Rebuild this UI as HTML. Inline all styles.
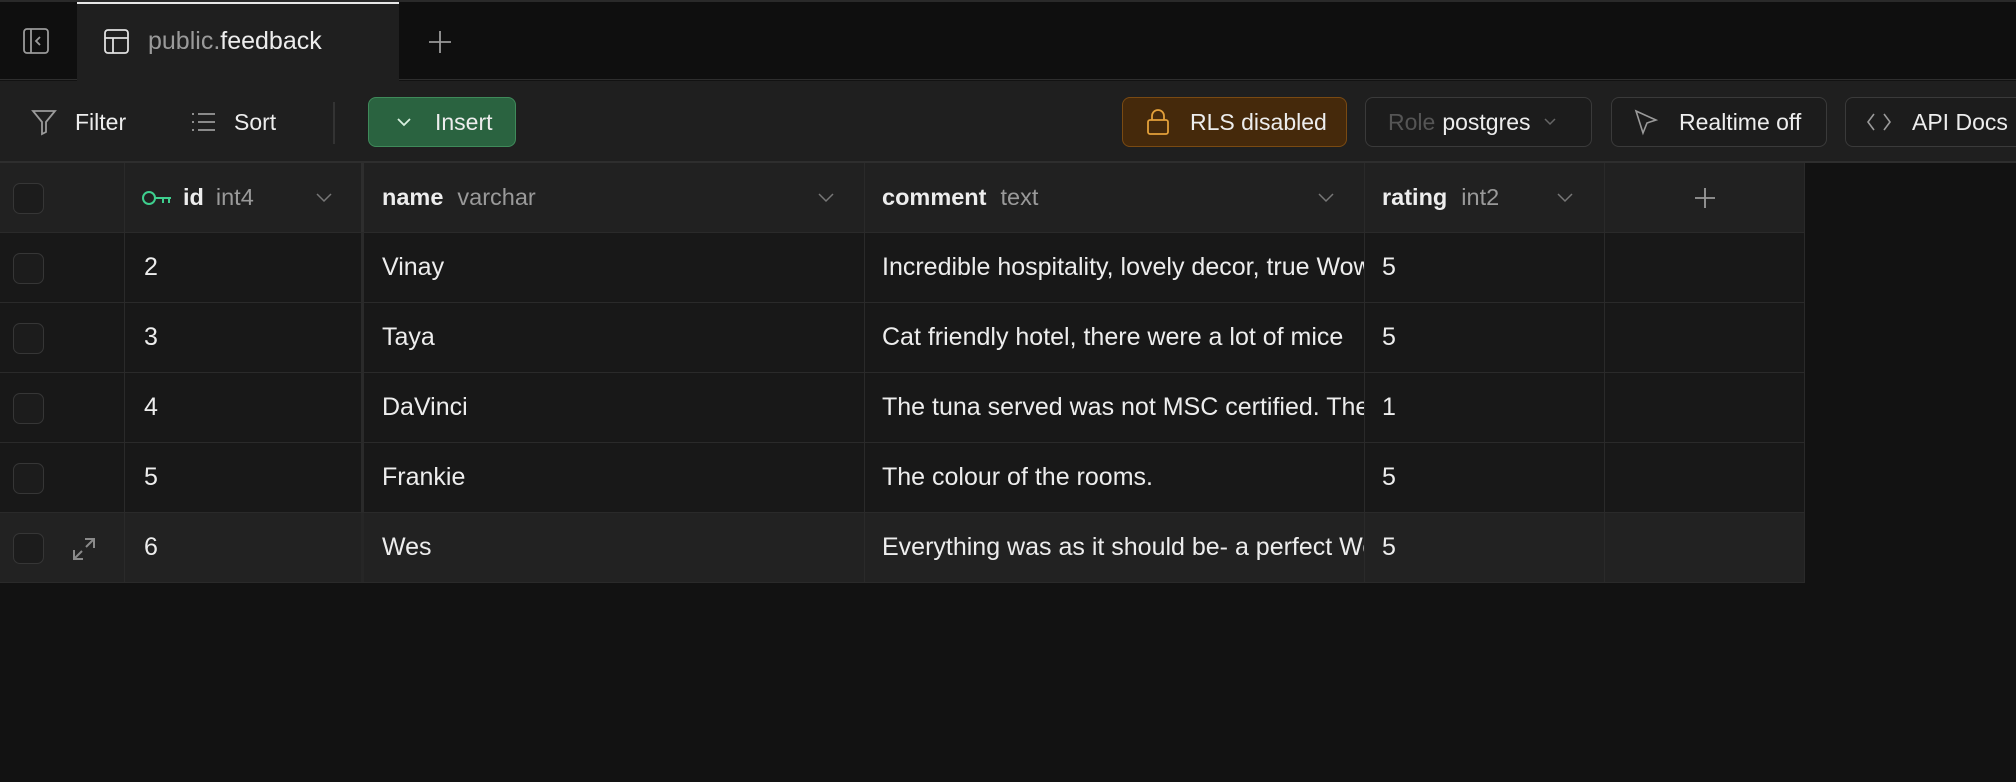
<!DOCTYPE html>
<html><head><meta charset="utf-8"><style>
*{box-sizing:border-box;margin:0;padding:0}
body{width:2016px;height:782px;background:#121212;font-family:"Liberation Sans",sans-serif;color:#ededed;position:relative;overflow:hidden}
.abs{position:absolute}
.tabbar{left:0;top:0;width:2016px;height:80px;background:#0f0f0f;border-top:2px solid #2a2a2a;border-bottom:1px solid #2e2e2e}
.tab{left:77px;top:2px;width:322px;height:79px;background:#1f1f1f;border-top:2px solid #e8e8e8}
.toolbar{left:0;top:81px;width:2016px;height:82px;background:#1f1f1f;border-bottom:2px solid #2e2e2e}
.btn{position:absolute;top:97px;height:50px;border:1.5px solid #3a3a3a;border-radius:8px;display:flex;align-items:center;font-size:23px;color:#ededed;overflow:hidden;white-space:nowrap}
.btn span{font-size:23px}
.t{font-size:23px;position:absolute}
.grid{left:0;top:163px;width:1805px}
.row{position:absolute;left:0;width:1805px;height:70px;border-bottom:1.5px solid #2a2a2a;background:#181818}
.cell{position:absolute;top:0;height:100%;border-right:1.5px solid #2a2a2a;display:flex;align-items:center;font-size:25px;white-space:nowrap;overflow:hidden}
.hdr .cell b,.hdr .cell span{font-size:23.5px}
.cb{position:absolute;left:13px;top:20px;width:31px;height:31px;border:1.5px solid #363636;border-radius:7px;background:#1c1c1c}
.hdr{background:#212121}
.g{color:#9a9a9a}
</style></head><body>
<div class="abs tabbar"></div>
<svg class="abs" style="left:22px;top:27px" width="28" height="28" viewBox="0 0 28 28" fill="none" stroke="#9a9a9a" stroke-width="1.8"><rect x="2" y="2" width="24" height="24" rx="3"/><line x1="9" y1="2" x2="9" y2="26"/><path d="M18 10l-4 4 4 4"/></svg>
<div class="abs tab"></div>
<svg class="abs" style="left:103px;top:28px" width="27" height="27" viewBox="0 0 27 27" fill="none" stroke="#e0e0e0" stroke-width="1.8"><rect x="2" y="2" width="23" height="23" rx="3"/><line x1="2" y1="10" x2="25" y2="10"/><line x1="10" y1="10" x2="10" y2="25"/></svg>
<div class="abs t" style="left:148px;top:27px;font-size:25px"><span class="g">public.</span>feedback</div>
<svg class="abs" style="left:428px;top:30px" width="24" height="24" viewBox="0 0 24 24" stroke="#9a9a9a" stroke-width="1.8"><line x1="12" y1="1" x2="12" y2="23"/><line x1="1" y1="12" x2="23" y2="12"/></svg>

<div class="abs toolbar"></div>
<svg class="abs" style="left:30px;top:108px" width="28" height="28" viewBox="0 0 28 28" fill="none" stroke="#9a9a9a" stroke-width="1.8"><path d="M3 3h22l-9 11v10l-4 2V14z"/></svg>
<div class="abs t" style="left:75px;top:109px">Filter</div>
<svg class="abs" style="left:191px;top:111px" width="26" height="22" viewBox="0 0 26 22" stroke="#9a9a9a" stroke-width="1.8"><line x1="1" y1="3" x2="3" y2="3"/><line x1="7" y1="3" x2="24" y2="3"/><line x1="1" y1="11" x2="3" y2="11"/><line x1="7" y1="11" x2="24" y2="11"/><line x1="1" y1="19" x2="3" y2="19"/><line x1="7" y1="19" x2="24" y2="19"/></svg>
<div class="abs t" style="left:234px;top:109px">Sort</div>
<div class="abs" style="left:333px;top:102px;width:2px;height:42px;background:#333"></div>
<div class="btn" style="left:368px;width:148px;background:#2a6340;border-color:#3f8a5a"><svg style="margin-left:26px" width="18" height="12" viewBox="0 0 18 12" fill="none" stroke="#d8f0df" stroke-width="1.8"><path d="M3 3l6 6 6-6"/></svg><span style="margin-left:22px">Insert</span></div>

<div class="btn" style="left:1122px;width:225px;background:#45290b;border-color:#7a4a12"><svg style="margin-left:23px" width="24" height="28" viewBox="0 0 24 28" fill="none" stroke="#e3a03a" stroke-width="1.8"><path d="M6 12V8a6 6 0 0 1 12 0v4"/><rect x="2" y="12" width="20" height="14" rx="2"/></svg><span style="margin-left:20px">RLS disabled</span></div>
<div class="btn" style="left:1365px;width:227px;background:#1c1c1c"><span style="margin-left:22px;color:#555">Role</span><span style="margin-left:7px">postgres</span><svg style="margin-left:12px" width="14" height="10" viewBox="0 0 14 10" fill="none" stroke="#666" stroke-width="1.5"><path d="M2 2l5 5 5-5"/></svg></div>
<div class="btn" style="left:1611px;width:216px;background:#1c1c1c"><svg style="margin-left:21px" width="26" height="28" viewBox="0 0 26 28" fill="none" stroke="#9a9a9a" stroke-width="1.6"><path d="M3 3l20 9-9 3-4 10z"/></svg><span style="margin-left:20px">Realtime off</span></div>
<div class="btn" style="left:1845px;width:200px;background:#1c1c1c"><svg style="margin-left:20px" width="26" height="22" viewBox="0 0 26 22" fill="none" stroke="#9a9a9a" stroke-width="1.6"><path d="M8 3L2 11l6 8M18 3l6 8-6 8"/></svg><span style="margin-left:20px">API Docs</span></div>

<div class="abs grid">
<div class="row hdr" style="top:0">
 <div class="cell" style="left:0;width:125px"><div class="cb"></div></div>
 <div class="cell" style="left:125px;width:239px;border-right:3px solid #2e2e2e"><svg style="margin-left:16px" width="32" height="18" viewBox="0 0 32 18" fill="none" stroke="#3ecf8e" stroke-width="2"><circle cx="8" cy="9" r="6"/><path d="M14 9h16M22 9v5M28 9v5"/></svg><b style="margin-left:10px">id</b><span class="g" style="margin-left:12px">int4</span><svg style="position:absolute;left:190px" width="18" height="12" viewBox="0 0 18 12" fill="none" stroke="#777" stroke-width="1.5"><path d="M2 2l7 7 7-7"/></svg></div>
 <div class="cell" style="left:364px;width:501px"><b style="margin-left:18px">name</b><span class="g" style="margin-left:14px">varchar</span><svg style="position:absolute;left:453px" width="18" height="12" viewBox="0 0 18 12" fill="none" stroke="#777" stroke-width="1.5"><path d="M2 2l7 7 7-7"/></svg></div>
 <div class="cell" style="left:865px;width:500px"><b style="margin-left:17px">comment</b><span class="g" style="margin-left:14px">text</span><svg style="position:absolute;left:452px" width="18" height="12" viewBox="0 0 18 12" fill="none" stroke="#777" stroke-width="1.5"><path d="M2 2l7 7 7-7"/></svg></div>
 <div class="cell" style="left:1365px;width:240px"><b style="margin-left:17px">rating</b><span class="g" style="margin-left:14px">int2</span><svg style="position:absolute;left:191px" width="18" height="12" viewBox="0 0 18 12" fill="none" stroke="#777" stroke-width="1.5"><path d="M2 2l7 7 7-7"/></svg></div>
 <div class="cell" style="left:1605px;width:200px;justify-content:center"><svg width="22" height="22" viewBox="0 0 22 22" stroke="#9a9a9a" stroke-width="1.8"><line x1="11" y1="1" x2="11" y2="21"/><line x1="1" y1="11" x2="21" y2="11"/></svg></div>
</div>

<div class="row" style="top:70px"><div class="cell" style="left:0;width:125px"><div class="cb"></div></div><div class="cell" style="left:125px;width:239px;border-right:3px solid #2a2a2a;padding-left:19px">2</div><div class="cell" style="left:364px;width:501px;padding-left:18px">Vinay</div><div class="cell" style="left:865px;width:500px;padding-left:17px">Incredible hospitality, lovely decor, true Wow factor</div><div class="cell" style="left:1365px;width:240px;padding-left:17px">5</div><div class="cell" style="left:1605px;width:200px"></div></div>
<div class="row" style="top:140px"><div class="cell" style="left:0;width:125px"><div class="cb"></div></div><div class="cell" style="left:125px;width:239px;border-right:3px solid #2a2a2a;padding-left:19px">3</div><div class="cell" style="left:364px;width:501px;padding-left:18px">Taya</div><div class="cell" style="left:865px;width:500px;padding-left:17px">Cat friendly hotel, there were a lot of mice</div><div class="cell" style="left:1365px;width:240px;padding-left:17px">5</div><div class="cell" style="left:1605px;width:200px"></div></div>
<div class="row" style="top:210px"><div class="cell" style="left:0;width:125px"><div class="cb"></div></div><div class="cell" style="left:125px;width:239px;border-right:3px solid #2a2a2a;padding-left:19px">4</div><div class="cell" style="left:364px;width:501px;padding-left:18px">DaVinci</div><div class="cell" style="left:865px;width:500px;padding-left:17px">The tuna served was not MSC certified. The</div><div class="cell" style="left:1365px;width:240px;padding-left:17px">1</div><div class="cell" style="left:1605px;width:200px"></div></div>
<div class="row" style="top:280px"><div class="cell" style="left:0;width:125px"><div class="cb"></div></div><div class="cell" style="left:125px;width:239px;border-right:3px solid #2a2a2a;padding-left:19px">5</div><div class="cell" style="left:364px;width:501px;padding-left:18px">Frankie</div><div class="cell" style="left:865px;width:500px;padding-left:17px">The colour of the rooms.</div><div class="cell" style="left:1365px;width:240px;padding-left:17px">5</div><div class="cell" style="left:1605px;width:200px"></div></div>
<div class="row" style="top:350px;background:#222"><div class="cell" style="left:0;width:125px"><div class="cb"></div><svg style="position:absolute;left:71px;top:24px" width="26" height="24" viewBox="0 0 26 24" fill="none" stroke="#8a8a8a" stroke-width="2"><path d="M14 2h9v9M23 2l-8 8M12 22H3v-9M3 22l8-8"/></svg></div><div class="cell" style="left:125px;width:239px;border-right:3px solid #262626;padding-left:19px">6</div><div class="cell" style="left:364px;width:501px;padding-left:18px">Wes</div><div class="cell" style="left:865px;width:500px;padding-left:17px">Everything was as it should be- a perfect Wow</div><div class="cell" style="left:1365px;width:240px;padding-left:17px">5</div><div class="cell" style="left:1605px;width:200px"></div></div>
</div>
</body></html>
